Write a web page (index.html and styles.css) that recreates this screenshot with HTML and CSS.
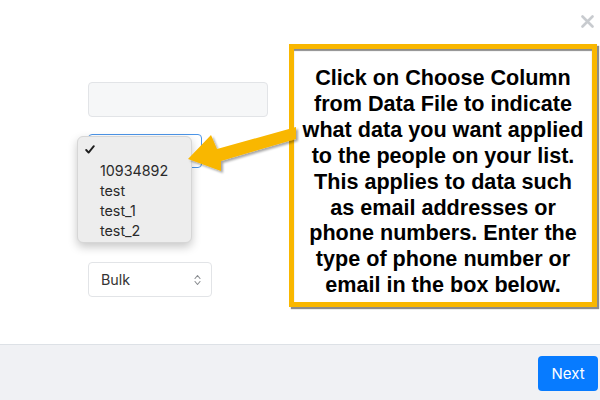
FILE: index.html
```html
<!DOCTYPE html>
<html>
<head>
<meta charset="utf-8">
<link rel="stylesheet" href="styles.css">
</head>
<body>
<div class="modal">
  <div class="modal-body">
    <button class="close" aria-label="Close">
      <svg width="13" height="13" viewBox="0 0 13 13"><path d="M1.5 1.5 L11.5 11.5 M11.5 1.5 L1.5 11.5" stroke="#c8cbcf" stroke-width="2.6" stroke-linecap="round"/></svg>
    </button>
    <div class="field field-empty"></div>
    <div class="select-wrap">
      <div class="field select-focus"></div>
      <ul class="menu">
        <li class="checked">
          <svg class="check" width="10" height="9" viewBox="0 0 10 9"><path d="M1.2 5 L3.6 7.6 L8.8 1.2" fill="none" stroke="#1e1e1e" stroke-width="1.9" stroke-linecap="round" stroke-linejoin="round"/></svg>
        </li>
        <li>10934892</li>
        <li>test</li>
        <li>test_1</li>
        <li>test_2</li>
      </ul>
    </div>
    <div class="field select-bulk">
      <span>Bulk</span>
      <svg class="updown" width="7" height="12" viewBox="0 0 7 12"><path d="M1 4.5 L3.5 1.5 L6 4.5 M1 7.5 L3.5 10.5 L6 7.5" fill="none" stroke="#8a8d91" stroke-width="1.1" stroke-linecap="round" stroke-linejoin="round"/></svg>
    </div>
    <div class="callout">Click on Choose Column<br>from Data File to indicate<br>what data you want applied<br>to the people on your list.<br>This applies to data such<br>as email addresses or<br>phone numbers. Enter the<br>type of phone number or<br>email in the box below.</div>
    <svg class="arrow" width="600" height="400" viewBox="0 0 600 400">
      <defs>
        <filter id="sh" x="-10%" y="-10%" width="130%" height="140%">
          <feDropShadow dx="2" dy="2" stdDeviation="1.2" flood-color="#000" flood-opacity="0.35"/>
        </filter>
      </defs>
      <polygon filter="url(#sh)" fill="#f9b700" points="188,159 211,135 217,149 296,127 296,139 221,161 221,171"/>
    </svg>
  </div>
  <div class="modal-footer">
    <button class="btn-next">Next</button>
  </div>
</div>
</body>
</html>
```
FILE: styles.css
```css
* { box-sizing: border-box; }
html, body { margin: 0; padding: 0; }
body {
  width: 600px;
  height: 400px;
  overflow: hidden;
  background: #fff;
  font-family: "Inter", "Liberation Sans", sans-serif;
  color: #333;
}
.modal {
  display: flex;
  flex-direction: column;
  height: 400px;
}
.modal-body {
  position: relative;
  flex: 1;
  padding: 82px 0 0 88px;
}
.close {
  position: absolute;
  top: 15px;
  left: 581px;
  width: 13px;
  height: 13px;
  padding: 0;
  border: 0;
  background: none;
  display: block;
}
.close svg { display: block; }
.field {
  border: 1px solid #e2e4e7;
  border-radius: 4px;
  background: #fff;
}
.field-empty {
  width: 180px;
  height: 35px;
  background: #f6f7f8;
  margin-bottom: 17px;
}
.select-wrap {
  position: relative;
  width: 114px;
  height: 34px;
}
.select-focus {
  width: 114px;
  height: 34px;
  border-color: #4c95e8;
}
.menu {
  position: absolute;
  left: -11px;
  top: 2px;
  width: 115px;
  height: 107px;
  margin: 0;
  padding: 4px 0 0 0;
  list-style: none;
  background: #ededed;
  border: 1px solid #d6d6d6;
  border-radius: 6px;
  box-shadow: 0 4px 10px rgba(0, 0, 0, 0.22);
  font-size: 14.3px;
  color: #2a2a2a;
}
.menu li {
  height: 20px;
  line-height: 20px;
  padding-left: 22px;
}
.menu li.checked {
  position: relative;
}
.check {
  position: absolute;
  left: 7px;
  top: 4px;
  display: block;
}
.select-bulk {
  margin-top: 94px;
  width: 124px;
  height: 35px;
  display: flex;
  align-items: center;
  justify-content: space-between;
  padding: 0 10px 0 12px;
  font-size: 14.3px;
  color: #333;
}
.updown { display: block; }
.callout {
  position: absolute;
  left: 289px;
  top: 44px;
  width: 308px;
  height: 263px;
  border: 5px solid #f9b700;
  background: #fff;
  box-shadow: 2px 2px 1px rgba(0, 0, 0, 0.45), inset 0 2px 1px rgba(0, 0, 0, 0.45);
  padding-top: 16px;
  font-family: "Liberation Sans", Arial, sans-serif;
  font-weight: 700;
  font-size: 21.6px;
  line-height: 25.9px;
  text-align: center;
  color: #000;
}
.arrow {
  position: absolute;
  left: 0;
  top: 0;
  pointer-events: none;
}
.modal-footer {
  height: 56px;
  background: #f0f1f4;
  border-top: 1px solid #dde1e6;
  display: flex;
  justify-content: flex-end;
  align-items: center;
  padding: 0 2px 0 0;
}
.btn-next {
  width: 60px;
  height: 35px;
  border: 0;
  border-radius: 4px;
  background: #077bff;
  color: #fff;
  font-family: "Inter", "Liberation Sans", sans-serif;
  font-size: 15px;
  padding: 0;
  margin-top: 1px;
}
```
